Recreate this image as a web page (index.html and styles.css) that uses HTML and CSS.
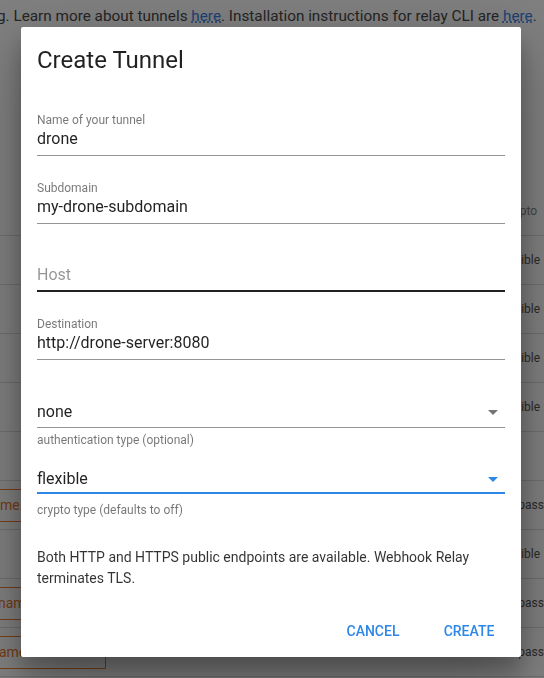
FILE: index.html
```html
<!DOCTYPE html>
<html lang="en">
<head>
<meta charset="utf-8">
<title>Create Tunnel</title>
<link rel="stylesheet" href="styles.css">
</head>
<body>
<div class="page" aria-hidden="true">
  <div class="intro">
    <div class="intro-line">Tunnels let you expose services running behind NAT or a firewall, without any port forwarding or DNS setup, just by querying.</div>
    <div class="intro-line intro-cut">g. Learn more about tunnels <a href="#">here</a>. Installation instructions for relay CLI are <a href="#">here</a>.</div>
  </div>
  <div class="table">
    <div class="row row-head"><div class="cell-host"></div><div class="cell-crypto">Crypto</div></div>
    <div class="row"><div class="cell-host"></div><div class="cell-crypto">flexible</div></div>
    <div class="row"><div class="cell-host"></div><div class="cell-crypto">flexible</div></div>
    <div class="row"><div class="cell-host"></div><div class="cell-crypto">flexible</div></div>
    <div class="row"><div class="cell-host"></div><div class="cell-crypto">flexible</div></div>
    <div class="row"><div class="cell-host"></div><div class="cell-crypto">off</div></div>
    <div class="row"><div class="cell-host"><div class="host-btn">me.</div></div><div class="cell-crypto">tls-passthrough</div></div>
    <div class="row"><div class="cell-host"></div><div class="cell-crypto">flexible</div></div>
    <div class="row"><div class="cell-host"><div class="host-btn host-btn-b">nam</div></div><div class="cell-crypto">tls-passthrough</div></div>
    <div class="row"><div class="cell-host"><div class="host-btn host-btn-c">ame</div></div><div class="cell-crypto">tls-passthrough</div></div>
  </div>
</div>

<div class="backdrop">
  <div class="dialog" role="dialog">
    <div class="dialog-body">
      <h2 class="title">Create Tunnel</h2>

      <div class="field">
        <div class="field-label">Name of your tunnel</div>
        <div class="field-value">drone</div>
      </div>
      <div class="field">
        <div class="field-label">Subdomain</div>
        <div class="field-value">my-drone-subdomain</div>
      </div>
      <div class="field field-hover">
        <div class="field-label"></div>
        <div class="field-value placeholder">Host</div>
      </div>
      <div class="field">
        <div class="field-label">Destination</div>
        <div class="field-value">http://drone-server:8080</div>
      </div>

      <div class="select">
        <div class="select-value">none</div>
        <svg class="select-arrow" viewBox="0 0 24 24" width="24" height="24"><path d="M7 10l5 5 5-5z"/></svg>
      </div>
      <div class="helper">authentication type (optional)</div>

      <div class="select select-focused">
        <div class="select-value">flexible</div>
        <svg class="select-arrow arrow-blue" viewBox="0 0 24 24" width="24" height="24"><path d="M7 10l5 5 5-5z"/></svg>
      </div>
      <div class="helper helper-2">crypto type (defaults to off)</div>

      <p class="text">Both HTTP and HTTPS public endpoints are available. Webhook Relay terminates TLS.</p>
    </div>
    <div class="actions">
      <button class="btn" type="button">Cancel</button>
      <button class="btn" type="button">Create</button>
    </div>
  </div>
</div>
</body>
</html>
```

FILE: styles.css
```css
html, body {
  margin: 0;
  padding: 0;
}

body {
  overflow: hidden;
  background: #ffffff;
  font-family: Roboto, "Liberation Sans", Arial, sans-serif;
  color: rgba(0, 0, 0, 0.87);
}

/* ---------- background page ---------- */
.page {
  width: 544px;
}

.intro {
  margin-top: -20px;
  font-size: 15.3px;
  line-height: 24px;
  color: #4a4a4a;
  white-space: nowrap;
  overflow: hidden;
}

.intro-line {
  overflow: hidden;
}

.intro-cut {
  text-indent: -3px;
}

.intro a {
  color: #3b82e6;
  text-decoration: underline dotted;
}

.table {
  margin-top: 158px;
  font-size: 12px;
}

.row {
  display: grid;
  grid-template-columns: 502px 42px;
  align-items: center;
  height: 49px;
  box-sizing: border-box;
  border-bottom: 1px solid #dcdcdc;
}

.row-head {
  height: 50px;
}

.cell-host {
  overflow: hidden;
}

.cell-crypto {
  white-space: nowrap;
  overflow: hidden;
  color: #555555;
}

.row-head .cell-crypto {
  color: #8a8a8a;
}

.host-btn {
  width: 106px;
  height: 33px;
  box-sizing: border-box;
  border: 1px solid #ef7d2c;
  border-left: 0;
  display: flex;
  align-items: center;
  font-size: 14px;
  color: #e8772a;
  white-space: nowrap;
  overflow: hidden;
}

.host-btn-b {
  text-indent: -2px;
}

.host-btn-c {
  text-indent: -1px;
}

/* ---------- dialog ---------- */
.backdrop {
  position: fixed;
  inset: 0;
  background: rgba(0, 0, 0, 0.5);
  display: flex;
  align-items: flex-start;
  padding: 27px 23px 0 21px;
}

.dialog {
  width: 500px;
  flex: none;
  background: #ffffff;
  border-radius: 2px;
  box-shadow: 0 19px 60px rgba(0, 0, 0, 0.3), 0 15px 20px rgba(0, 0, 0, 0.22);
  display: flex;
  flex-direction: column;
}

.dialog-body {
  padding: 17px 16px 0;
}

.title {
  margin: 0 0 12px;
  font-size: 24px;
  line-height: 32px;
  font-weight: 400;
  color: rgba(0, 0, 0, 0.87);
}

.field {
  height: 68px;
  box-sizing: border-box;
  padding-top: 25px;
  padding-bottom: 4px;
  border-bottom: 1px solid rgba(0, 0, 0, 0.42);
  display: flex;
  flex-direction: column;
}

.field-hover {
  border-bottom: 2px solid rgba(0, 0, 0, 0.87);
  padding-bottom: 3px;
}

.field-label {
  height: 14px;
  font-size: 12px;
  line-height: 14px;
  color: rgba(0, 0, 0, 0.54);
}

.field-value {
  font-size: 16px;
  line-height: 24px;
  color: rgba(0, 0, 0, 0.87);
}

.placeholder {
  color: rgba(0, 0, 0, 0.42);
}

.select {
  display: flex;
  align-items: center;
  padding-top: 40px;
  padding-bottom: 3px;
  border-bottom: 1px solid rgba(0, 0, 0, 0.42);
}

.select-focused {
  margin-top: 20px;
  padding-top: 0;
  padding-bottom: 1px;
  border-bottom: 2px solid #2d87e9;
}

.select-value {
  flex: 1;
  font-size: 16px;
  line-height: 24px;
  color: rgba(0, 0, 0, 0.87);
}

.select-arrow {
  flex: none;
  display: block;
  fill: rgba(0, 0, 0, 0.54);
}

.arrow-blue {
  fill: #2d87e9;
}

.helper {
  margin-top: 5px;
  font-size: 12px;
  line-height: 14px;
  color: rgba(0, 0, 0, 0.54);
}

.helper-2 {
  margin-top: 9px;
}

.text {
  margin: 30px 0 0;
  font-size: 14px;
  line-height: 20.5px;
  color: rgba(0, 0, 0, 0.8);
}

.actions {
  display: flex;
  justify-content: flex-end;
  gap: 8px;
  padding: 8px;
  margin-top: 17px;
}

.btn {
  min-width: 88px;
  height: 36px;
  padding: 0 16px;
  border: 0;
  background: transparent;
  font-family: Roboto, "Liberation Sans", Arial, sans-serif;
  font-size: 14px;
  font-weight: 500;
  text-transform: uppercase;
  color: #2d87e9;
  cursor: pointer;
}
```
